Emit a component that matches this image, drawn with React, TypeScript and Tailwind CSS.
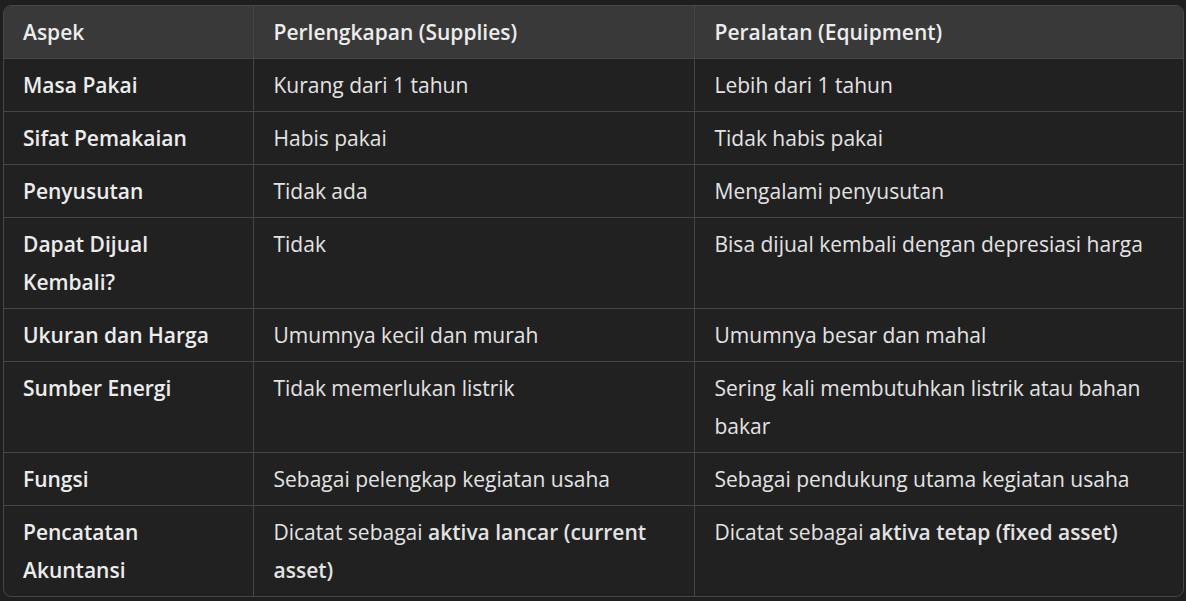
const rows: { aspek: string[]; supplies: React.ReactNode; equipment: React.ReactNode }[] = [
  { aspek: ['Masa Pakai'], supplies: 'Kurang dari 1 tahun', equipment: 'Lebih dari 1 tahun' },
  { aspek: ['Sifat Pemakaian'], supplies: 'Habis pakai', equipment: 'Tidak habis pakai' },
  { aspek: ['Penyusutan'], supplies: 'Tidak ada', equipment: 'Mengalami penyusutan' },
  { aspek: ['Dapat Dijual', 'Kembali?'], supplies: 'Tidak', equipment: 'Bisa dijual kembali dengan depresiasi harga' },
  { aspek: ['Ukuran dan Harga'], supplies: 'Umumnya kecil dan murah', equipment: 'Umumnya besar dan mahal' },
  { aspek: ['Sumber Energi'], supplies: 'Tidak memerlukan listrik', equipment: 'Sering kali membutuhkan listrik atau bahan bakar' },
  { aspek: ['Fungsi'], supplies: 'Sebagai pelengkap kegiatan usaha', equipment: 'Sebagai pendukung utama kegiatan usaha' },
  {
    aspek: ['Pencatatan', 'Akuntansi'],
    supplies: (
      <>
        Dicatat sebagai <strong className="font-semibold">aktiva lancar (current asset)</strong>
      </>
    ),
    equipment: (
      <>
        Dicatat sebagai <strong className="font-semibold">aktiva tetap (fixed asset)</strong>
      </>
    ),
  },
];

export default function App() {
  return (
    <div
      className="w-[1186px] h-[601px] bg-[#1f1f1f] pt-[5px] pl-[3px] text-[21px] leading-[38px] text-[#e3e3e3]"
      style={{ fontFamily: '"Open Sans", "Noto Sans", sans-serif' }}
    >
      <div className="w-[1181px] rounded-lg border border-[#464646] overflow-hidden bg-[#212121]">
        <table className="w-full border-collapse table-fixed">
          <colgroup>
            <col className="w-[249px]" />
            <col className="w-[441px]" />
            <col />
          </colgroup>
          <thead>
            <tr className="bg-[#393939] text-[#ececec] font-semibold text-left">
              <th className="px-[19px] py-[7px] font-semibold border-r border-b border-[#464646]">Aspek</th>
              <th className="px-[20px] py-[7px] font-semibold border-r border-b border-[#464646]">Perlengkapan (Supplies)</th>
              <th className="px-[20px] py-[7px] font-semibold border-b border-[#464646]">Peralatan (Equipment)</th>
            </tr>
          </thead>
          <tbody>
            {rows.map((r, i) => (
              <tr key={i} className="align-top">
                <td className={`px-[19px] py-[7px] font-semibold text-[#ececec] border-r border-[#464646] ${i < rows.length - 1 ? 'border-b' : ''}`}>
                  {r.aspek.map((a, j) => (
                    <div key={j}>{a}</div>
                  ))}
                </td>
                <td className={`px-[20px] py-[7px] border-r border-[#464646] ${i < rows.length - 1 ? 'border-b' : ''}`}>{r.supplies}</td>
                <td className={`px-[20px] py-[7px] border-[#464646] ${i < rows.length - 1 ? 'border-b' : ''}`}>{r.equipment}</td>
              </tr>
            ))}
          </tbody>
        </table>
      </div>
    </div>
  );
}
